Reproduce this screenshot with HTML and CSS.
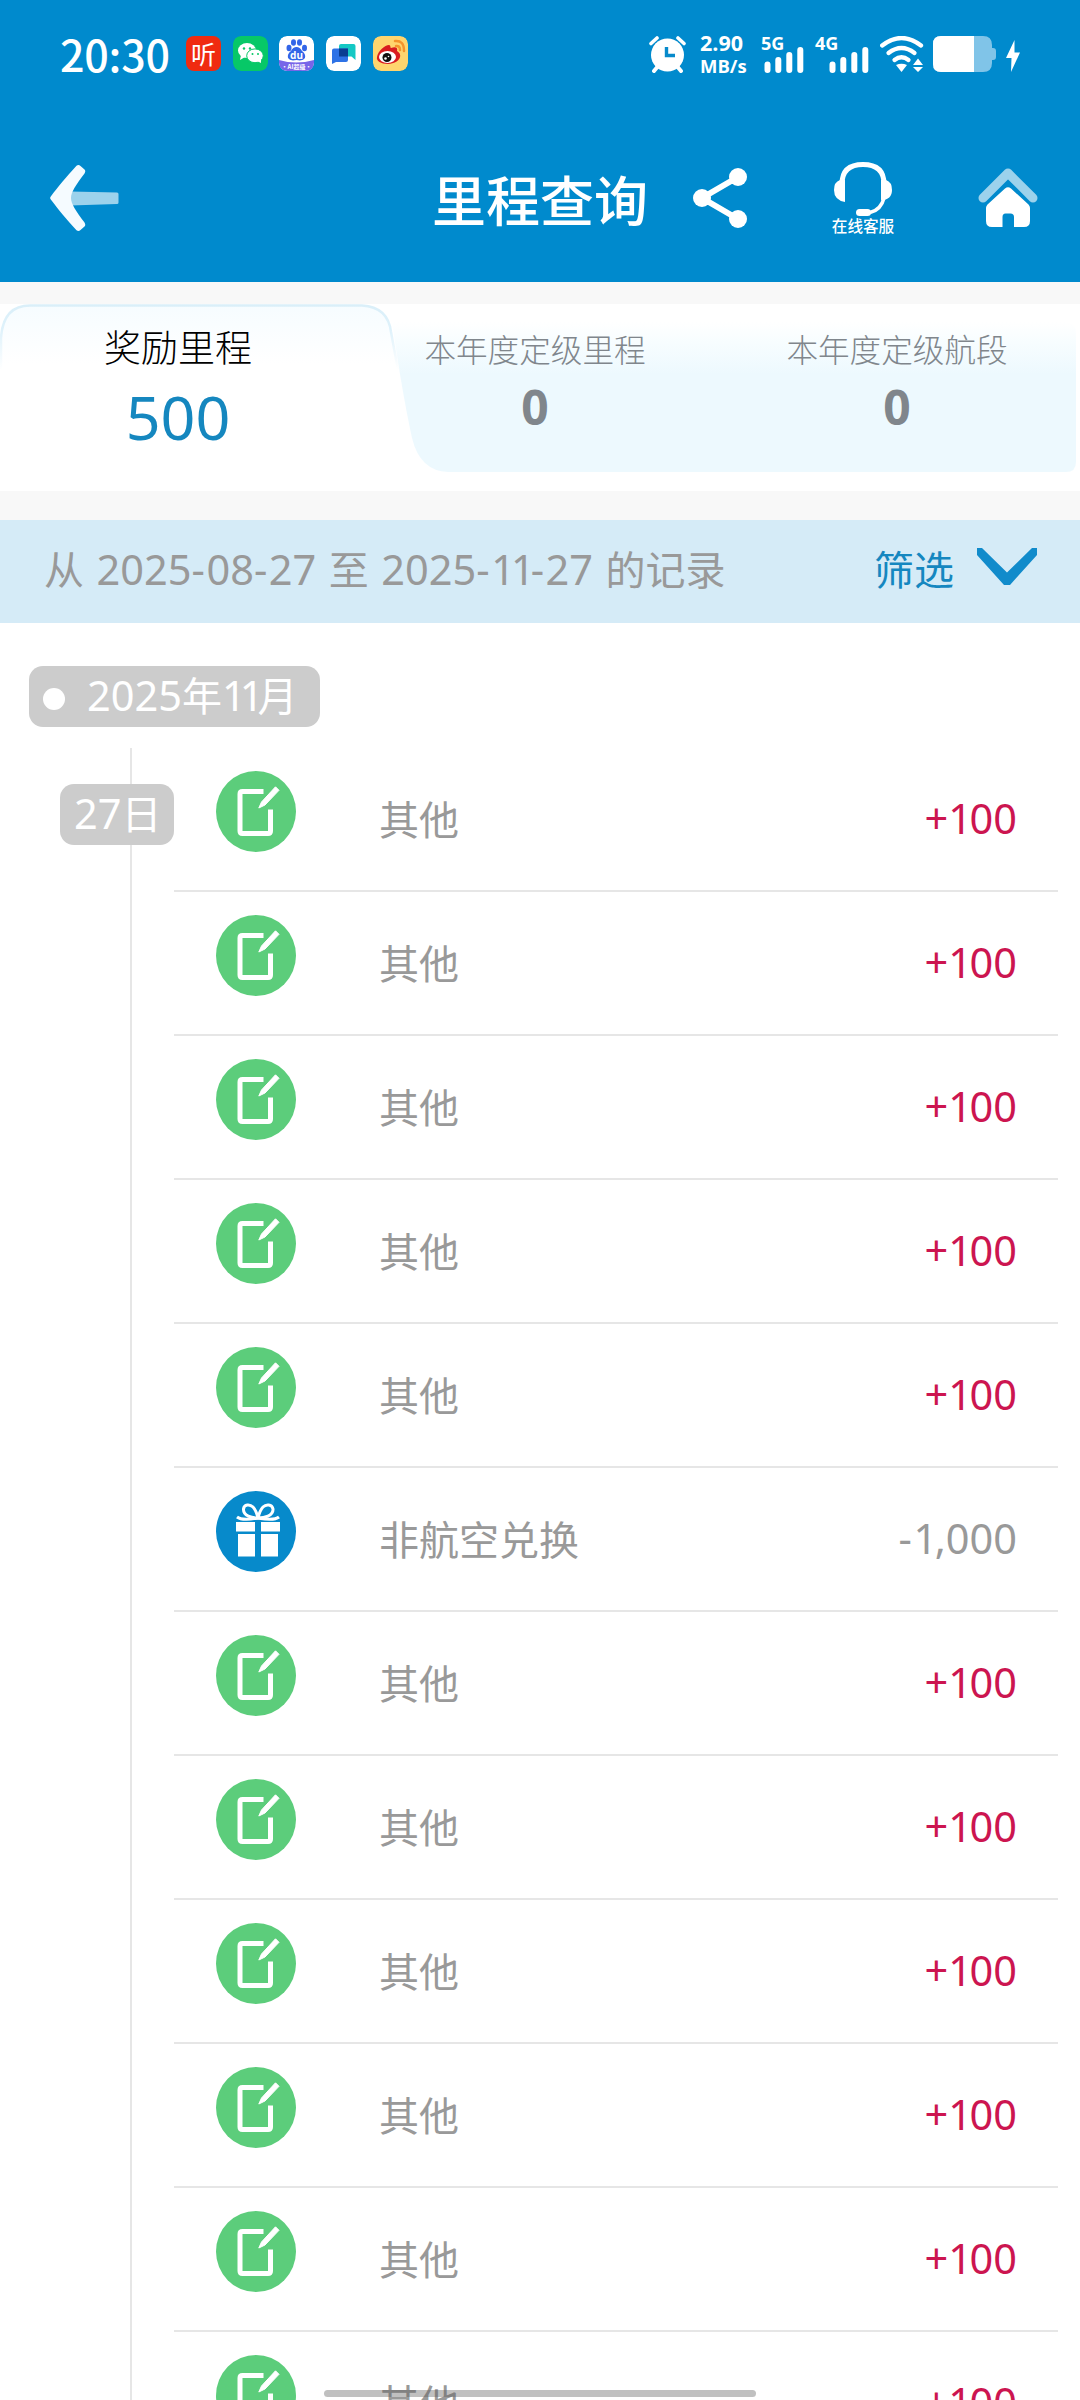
FILE: index.html
```html
<!DOCTYPE html>
<html lang="zh-CN">
<head>
<meta charset="utf-8">
<title>里程查询</title>
<link rel="stylesheet" href="styles.css">
</head>
<body>
<svg class="defs" width="0" height="0" aria-hidden="true">
  <symbol id="note" viewBox="0 0 80 81">
    <ellipse cx="40" cy="40.5" rx="40" ry="40.5" fill="#5ccd7b"/>
    <path d="M47.500 20.500H26.500Q24 20.500 24 23V60Q24 62.500 26.500 62.500H52Q54.500 62.500 54.500 60V38.500" fill="none" stroke="#fff" stroke-width="5"/>
    <path d="M59.500 15.800L63 19.300L49 34L42.800 37L45.500 31Z" fill="#fff" stroke="#fff" stroke-width="1" stroke-linejoin="round"/>
  </symbol>
  <symbol id="gift" viewBox="0 0 80 81">
    <ellipse cx="40" cy="40.5" rx="40" ry="40.500" fill="#078acb"/>
    <path d="M20 31H39V40.500H20ZM45 31H64V40.500H45ZM22 43H39V65.500H22ZM45 43H62V65.500H45Z" fill="#fff"/>
    <path d="M42 27C36 27 27 25 27.500 18C28 13 34 13 37 16C40 19 41 23 42 27C43 23 44 19 47 16C50 13 56 13 57 18C57.500 25 48 27 42 27" fill="none" stroke="#fff" stroke-width="3"/>
    <path d="M21 26C26 30 36 28 42 27C48 28 58 30 63 26" fill="none" stroke="#fff" stroke-width="3"/>
  </symbol>
  <symbol id="bars" viewBox="0 0 40 26">
    <path d="M3.500 17.500V23M14.300 13V23M25.300 8V23M36.300 3V23" stroke="#fff" stroke-width="6" stroke-linecap="round"/>
  </symbol>
</svg>

<header class="top">
  <div class="status">
    <span class="clock">20:30</span>
    <div class="apps">
      <span class="app app-listen">听</span>
      <svg class="app" viewBox="0 0 35 35"><rect width="35" height="35" rx="8" fill="#07c867"/><ellipse cx="14" cy="14.500" rx="9" ry="7.500" fill="#fff"/><path d="M8 19L7 24L12 21Z" fill="#fff"/><ellipse cx="22" cy="19.800" rx="8.300" ry="6.900" fill="#fff" stroke="#07c867" stroke-width="1"/><path d="M24 25L28 27V23Z" fill="#fff"/><g fill="#07c867"><circle cx="11" cy="12.500" r="1.200"/><circle cx="17" cy="12.500" r="1.200"/><circle cx="19.500" cy="18" r="1"/><circle cx="25" cy="18" r="1"/></g></svg>
      <svg class="app" viewBox="0 0 35 35"><rect width="35" height="35" rx="8" fill="#fff"/><path d="M0 24Q17 29 35 24V27Q35 35 27 35H8Q0 35 0 27Z" fill="#7765e8"/><g fill="#3265e8"><ellipse cx="10" cy="12" rx="2.500" ry="3.300"/><ellipse cx="14.500" cy="6.500" rx="2.500" ry="3.200"/><ellipse cx="20.500" cy="6.500" rx="2.500" ry="3.200"/><ellipse cx="25.500" cy="12" rx="2.500" ry="3.300"/><path d="M17.500 11Q21 11 23 15Q27 18 26 22Q24 25.500 17.500 24Q11 25.500 9 22Q8 18 12 15Q14 11 17.500 11Z"/></g><text x="17.500" y="22.500" class="du">du</text><text x="17.500" y="33" class="ai">·AI超级·</text></svg>
      <svg class="app" viewBox="0 0 35 35"><rect width="35" height="35" rx="8" fill="#fff"/><path d="M15 8H27.500Q29.500 8 29.500 10V24L25.500 20.500H13V10Q13 8 15 8Z" fill="#14c8c4"/><path d="M8 12.500H22V24Q22 26 20 26H10L6 28V14.500Q6 12.500 8 12.500Z" fill="#2d72e6"/><path d="M13 12.500H22V20.500H13Z" fill="#0a3d91"/></svg>
      <svg class="app" viewBox="0 0 35 35"><rect width="35" height="35" rx="8" fill="#ffd56e"/><path d="M4 21C5 15 12 9 16 9C18 9 17 12 18 12C23 10 25 12 24 15C30 18 28 27 15 28C8 28 3 25 4 21Z" fill="#d91c20"/><ellipse cx="14.500" cy="21" rx="8.500" ry="6" fill="#fff"/><circle cx="14" cy="21.500" r="4.500" fill="#111"/><circle cx="12.500" cy="22.500" r="1.300" fill="#fff"/><circle cx="15.500" cy="20.500" r=".8" fill="#fff"/><path d="M22 5Q31 4 31 15M23 10Q27 9.500 27 14" fill="none" stroke="#f5942c" stroke-width="2.500" stroke-linecap="round"/></svg>
    </div>
    <div class="signals">
      <svg class="alarm" viewBox="0 0 37 37"><circle cx="18.500" cy="19" r="16.500" fill="#fff"/><path d="M2 7.500L8 2M35 7.500L29 2" stroke="#fff" stroke-width="3.600" stroke-linecap="round"/><path d="M5 35L10 29M32 35L27 29" stroke="#fff" stroke-width="4" stroke-linecap="round"/><path d="M17.500 11V19.500H26" fill="none" stroke="#078acb" stroke-width="3.400"/></svg>
      <span class="speed"><b>2.90</b><b>MB/s</b></span>
      <span class="cell five"><b>5G</b><svg width="40" height="26"><use href="#bars"/></svg></span>
      <span class="cell four"><b>4G</b><svg width="40" height="26"><use href="#bars"/></svg></span>
      <svg class="wifi" viewBox="0 0 44 37"><g fill="none" stroke="#fff" stroke-width="4.300" stroke-linecap="round"><path d="M2.200 9.500Q21.500 -5.500 41 9.500"/><path d="M8.500 17Q21.500 7 34.500 17"/><path d="M14.500 24Q21.500 18.500 28.500 24"/></g><path d="M16 29Q21.500 26.500 27 29L21.500 36Z" fill="#fff"/><path d="M33 29L38 22.500L43 29ZM33 31L38 36L43 31Z" fill="#fff"/></svg>
      <svg class="battery" viewBox="0 0 63 36"><path d="M8 0H50Q59 0 59 9V12H60Q63 12 63 15V21Q63 24 60 24H59V27Q59 36 50 36H8Q0 36 0 28V8Q0 0 8 0Z" fill="#80c4e8"/><path d="M8 0H41V36H8Q0 36 0 28V8Q0 0 8 0Z" fill="#fff"/></svg>
      <svg class="bolt" viewBox="0 0 14 32"><path d="M8.500 0L0 18H5.500L5 32L14 12.500H8.500Z" fill="#fff"/></svg>
    </div>
  </div>
  <nav class="bar">
    <svg class="back" viewBox="0 0 69 66"><path d="M20 26.500L67 27.500Q68.500 27.500 68.500 29V37.500Q68.500 39 67 39L20 40.500Z" fill="#9cd2ec"/><path d="M26.500 .8Q28.500 -.8 30.500 1L34.500 4.500Q36 6 34.500 8.500C26 20 21 27 21 33C21 39 26 46 34.500 57.500Q36 60 34.500 61.500L30.500 65Q28.500 66.800 26.500 65.200C16 54 8 44 .8 34.500Q-.5 33 .8 31.500C8 22 16 12 26.500 .8Z" fill="#f5fbff"/></svg>
    <h1 class="title">里程查询</h1>
    <div class="actions">
      <svg class="share" viewBox="0 0 54 60"><path d="M45 9L9 30L45 51" fill="none" stroke="#fff" stroke-width="6"/><circle cx="45" cy="9" r="9" fill="#fff"/><circle cx="9" cy="30" r="9" fill="#fff"/><circle cx="45" cy="51" r="9" fill="#fff"/></svg>
      <div class="service">
        <svg viewBox="0 0 58 54"><path d="M8 22Q8 2.500 29 2.500Q50 2.500 50 22" fill="none" stroke="#fff" stroke-width="5"/><path d="M11 18V40Q0 38 0 28Q0 20 6 18ZM47 18V38Q58 38 58 28Q58 20 52 18Z" fill="#fff"/><path d="M50 36Q47 48 36 50.500" fill="none" stroke="#fff" stroke-width="3.500"/><rect x="22" y="47" width="15" height="7" rx="3.500" fill="#fff"/></svg>
        <span>在线客服</span>
      </div>
      <svg class="home" viewBox="0 0 60 59"><path d="M5 30L30 5L55 30" fill="none" stroke="#9cd2ec" stroke-width="9" stroke-linejoin="round" stroke-linecap="round"/><path d="M27 20.500Q30 18 33 20.500L50.500 36.500Q52 38 52 40V53Q52 59 46 59H36V49Q36 45.500 32.500 45.500H27.500Q24.500 45.500 24.500 49V59H14Q8 59 8 53V40Q8 38 9.500 36.500Z" fill="#fff"/></svg>
    </div>
  </nav>
</header>

<section class="tabs">
  <svg class="tabs-bg" viewBox="0 0 1080 187" aria-hidden="true">
    <defs>
      <linearGradient id="panel" x1="0" y1="18" x2="0" y2="70" gradientUnits="userSpaceOnUse"><stop offset="0" stop-color="#fff"/><stop offset=".4" stop-color="#f7fdff"/><stop offset="1" stop-color="#edf9fe"/></linearGradient>
      <linearGradient id="glow" x1="0" y1="0" x2="0" y2="60" gradientUnits="userSpaceOnUse"><stop offset="0" stop-color="#f6fcff"/><stop offset="1" stop-color="#fff"/></linearGradient>
      <linearGradient id="edge" x1="0" y1="0" x2="0" y2="66" gradientUnits="userSpaceOnUse"><stop offset="0" stop-color="#daeff9"/><stop offset=".4" stop-color="#dff2fb"/><stop offset="1" stop-color="#fff"/></linearGradient>
    </defs>
    <path d="M392 18H1065Q1076 18 1076 29V158Q1076 168 1066 168H448Q420 167 412 134Q402 88 392 18Z" fill="url(#panel)"/>
    <path d="M1 66V34Q3 1.500 30 1.500H362Q388 3 391 28L398 66Z" fill="url(#glow)"/>
    <path d="M1 66V34Q3 1.500 30 1.500H362Q388 3 391 28L398 66" fill="none" stroke="url(#edge)" stroke-width="2.500"/>
  </svg>
  <div class="tab active"><span class="label">奖励里程</span><span class="value">500</span></div>
  <div class="tab"><span class="label">本年度定级里程</span><span class="value">0</span></div>
  <div class="tab"><span class="label">本年度定级航段</span><span class="value">0</span></div>
</section>

<section class="filter">
  <span class="range">从 <span class="num">2025<i>-</i>08<i>-</i>27</span> 至 <span class="num">2025<i>-</i><span class="ones">11</span><i>-</i>27</span> 的记录</span>
  <span class="pick">筛选<svg viewBox="0 0 60 37"><path d="M0 0H5L30 24.500L55 0H60V7L33 37H27L0 7Z" fill="#118bcb"/></svg></span>
</section>

<main class="records">
  <div class="month"><i class="dot"></i><span><span class="num">2025</span>年<span class="num ones">11</span>月</span></div>
  <div class="timeline">
    <div class="rail"><span class="day"><span class="num">27</span>日</span></div>
    <ul class="list">
      <li><svg><use href="#note"/></svg><span class="kind">其他</span><span class="num gain">+<span class="ones">1</span>00</span></li>
      <li><svg><use href="#note"/></svg><span class="kind">其他</span><span class="num gain">+<span class="ones">1</span>00</span></li>
      <li><svg><use href="#note"/></svg><span class="kind">其他</span><span class="num gain">+<span class="ones">1</span>00</span></li>
      <li><svg><use href="#note"/></svg><span class="kind">其他</span><span class="num gain">+<span class="ones">1</span>00</span></li>
      <li><svg><use href="#note"/></svg><span class="kind">其他</span><span class="num gain">+<span class="ones">1</span>00</span></li>
      <li><svg><use href="#gift"/></svg><span class="kind">非航空兑换</span><span class="num spend"><i>-</i><span class="ones">1</span>,000</span></li>
      <li><svg><use href="#note"/></svg><span class="kind">其他</span><span class="num gain">+<span class="ones">1</span>00</span></li>
      <li><svg><use href="#note"/></svg><span class="kind">其他</span><span class="num gain">+<span class="ones">1</span>00</span></li>
      <li><svg><use href="#note"/></svg><span class="kind">其他</span><span class="num gain">+<span class="ones">1</span>00</span></li>
      <li><svg><use href="#note"/></svg><span class="kind">其他</span><span class="num gain">+<span class="ones">1</span>00</span></li>
      <li><svg><use href="#note"/></svg><span class="kind">其他</span><span class="num gain">+<span class="ones">1</span>00</span></li>
      <li><svg><use href="#note"/></svg><span class="kind">其他</span><span class="num gain">+<span class="ones">1</span>00</span></li>
    </ul>
  </div>
</main>
<div class="home-indicator"></div>
</body>
</html>
```
FILE: styles.css
```css
* { box-sizing: border-box; }
html, body { margin: 0; padding: 0; }
body {
  position: relative;
  width: 1080px;
  height: 2400px;
  overflow: hidden;
  display: flex;
  flex-direction: column;
  background: #f8f8f8;
  font-family: "Noto Sans CJK SC", "Noto Sans", sans-serif;
  font-size: 40px;
  line-height: 1;
  color: #999;
}
svg { display: block; flex: none; }
.defs { position: absolute; }
.num { font-family: "Noto Sans", sans-serif; font-size: 41.500px; line-height: 1; }
.num i { font-style: normal; letter-spacing: 1.500px; }
.ones { letter-spacing: -4px; }

/* header */
.top { flex: none; height: 282px; background: #008acd; color: #fff; }
.status { display: flex; height: 110px; padding: 36px 60px 0 60px; }
.clock { width: 126px; margin-top: -4px; font-size: 43px; font-weight: 500; line-height: 43px; letter-spacing: -.2px; }
.apps { display: flex; gap: 11.700px; }
.app { width: 35px; height: 35px; border-radius: 8px; }
.app-listen { background: #f02b10; font-size: 25px; line-height: 34px; text-align: center; }
.du { font: bold 10px "Noto Sans", sans-serif; fill: #fff; text-anchor: middle; }
.ai { font: bold 6px "Noto Sans CJK SC", sans-serif; fill: #fff; text-anchor: middle; }
.signals { display: flex; margin-left: auto; height: 38px; }
.alarm { width: 37px; height: 37px; margin-right: 14px; }
.speed { display: flex; flex-direction: column; gap: 1px; width: 61px; margin-top: -3px; font-family: "Open Sans", sans-serif; font-size: 21.500px; line-height: 20.500px; white-space: nowrap; }
.speed b:last-child { font-size: 18.500px; line-height: 21px; }
.cell { display: flex; flex-direction: column; width: 54px; font-family: "Open Sans", sans-serif; font-size: 18px; line-height: 14px; }
.cell svg { margin: -3px 0 0 3px; }
.four { width: 65px; }
.four svg { margin-left: 14px; }
.wifi { width: 44px; height: 37px; margin-right: 9px; }
.battery { width: 63px; height: 36px; margin-right: 10px; }
.bolt { width: 14px; height: 32px; margin-top: 4px; }
.bar { display: grid; grid-template-columns: 1fr auto 1fr; height: 172px; }
.back { width: 69px; height: 66px; margin: 55px 0 0 50px; }
.title { margin: 62px 0 0; font-size: 54px; line-height: 54px; font-weight: 500; }
.actions { display: flex; padding: 52px 0 0 45px; }
.share { width: 54px; height: 60px; margin-top: 6px; }
.service { display: flex; flex-direction: column; align-items: center; width: 64px; margin: 0 83px 0 84px; font-size: 15.600px; font-weight: 500; line-height: 16px; white-space: nowrap; }
.service svg { width: 58px; height: 54px; margin-bottom: 1px; }
.home { width: 60px; height: 59px; margin-top: 6px; }

/* mileage tabs */
.tabs { position: relative; flex: none; display: grid; grid-template-columns: 356px 358px 366px; height: 187px; margin-top: 22px; background: #fff; }
.tabs-bg { position: absolute; left: 0; top: 0; width: 1080px; height: 187px; }
.tab { position: relative; display: flex; flex-direction: column; align-items: center; padding-top: 28px; color: #80868c; }
.label { font-size: 31.600px; line-height: 32px; font-weight: 300; }
.value { margin-top: 19px; font-family: "Noto Sans", sans-serif; font-size: 48px; line-height: 48px; font-weight: 700; }
.active { padding-top: 23px; color: #000; }
.active .label { font-size: 37px; line-height: 38px; }
.active .value { margin-top: 21px; font-size: 61px; line-height: 61px; font-weight: 400; color: #1587bf; }

/* date filter */
.filter { flex: none; display: flex; justify-content: space-between; height: 103px; margin-top: 29px; padding: 26px 43px 0 44px; background: #d5ebf7; line-height: 44px; white-space: nowrap; }
.range { word-spacing: 3.600px; }
.pick { display: flex; gap: 23px; color: #1587c0; }
.pick svg { width: 60px; height: 37px; margin-top: 2px; }

/* records */
.records { flex: 1; min-height: 0; overflow: hidden; padding-top: 43px; background: #fff; }
.month { display: flex; align-items: center; width: 291px; height: 61px; margin-left: 29px; padding-left: 14px; border-radius: 14px; background: #ccc; color: #fff; line-height: 55px; white-space: nowrap; }
.month > span { margin-top: -4px; }
.month .ones { letter-spacing: -6px; }
.dot { width: 22px; height: 22px; margin: 4px 22px 0 0; border-radius: 50%; background: #fff; }
.timeline { display: flex; margin-top: 21px; }
.rail { width: 174px; padding: 36px 0 0 60px; background: linear-gradient(#e6e6e6, #e6e6e6) 130px 0 / 2px 100% no-repeat; }
.day { display: block; width: 114px; height: 61px; padding-left: 14px; border-radius: 14px; background: #ccc; color: #fff; line-height: 56px; white-space: nowrap; }
.list { width: 884px; margin: 0; padding: 0; list-style: none; }
.list li { display: flex; height: 144px; padding: 23px 41px 0 42px; border-bottom: 2px solid #e6e6e6; }
.list svg { width: 80px; height: 81px; }
.kind { margin: 25px auto 0 83px; line-height: 44px; }
.list .num { margin-top: 25px; line-height: 44px; }
.list .ones { letter-spacing: -2.500px; }
.gain { color: #cc1550; }
.spend { color: #999; }

.home-indicator { position: absolute; left: 324px; top: 2390px; width: 432px; height: 7px; border-radius: 4px; background: rgba(90, 90, 90, .38); }
```
